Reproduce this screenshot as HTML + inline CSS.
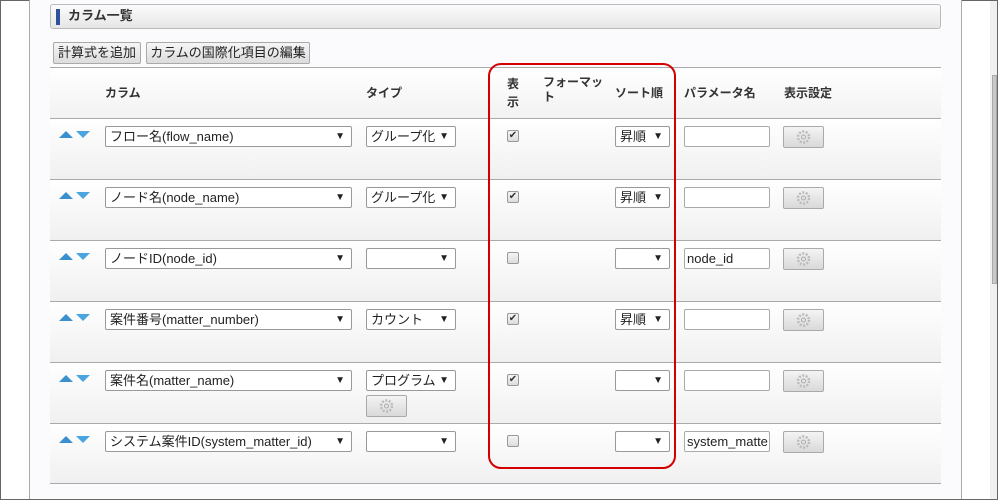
<!DOCTYPE html>
<html><head><meta charset="utf-8"><style>
*{box-sizing:border-box;margin:0;padding:0}
body{width:998px;height:500px;position:relative;overflow:hidden;background:#fff;font-family:"Liberation Sans","Noto Sans CJK JP",sans-serif;font-size:13px;color:#222}
.a{position:absolute}
.frame{left:0;top:0;width:998px;height:500px;border:1px solid #666}
.main{left:29px;top:0;width:933px;height:499px;background:#fbfbfd;border-left:1px solid #aaa;border-right:1px solid #aaa}
.title{left:50px;top:4px;width:891px;height:25px;border:1px solid #bbb;border-radius:3px;background:linear-gradient(#fbfbfb,#e6e6e6)}
.title b{position:absolute;left:5px;top:4px;width:4px;height:16px;background:#2f4f9f}
.title span{position:absolute;left:17px;top:2px;line-height:18px;font-weight:bold;font-size:13px;color:#333}
.btn{top:42px;height:22px;border:1px solid #aaa;border-radius:2px;background:linear-gradient(#f6f6f6,#dcdcdc);font-size:13px;line-height:18px;padding:1px 0;text-align:center;white-space:nowrap;color:#222}
.hdr{left:50px;top:67px;width:891px;height:52px;border-top:1px solid #aaa;background:linear-gradient(#fff,#f2f2f2)}
.row{left:50px;width:891px;height:61px;border-top:1px solid #aaa;background:linear-gradient(#fff,#f0f0f0)}
.h{font-weight:bold;font-size:12px;line-height:15px;color:#333}
.sel{height:21px;border:1px solid #999;border-radius:2px;background:#fff;font-size:13px;line-height:17px;padding:1px 4px;white-space:nowrap;overflow:hidden}
.sel i{position:absolute;right:6px;top:1px;font-style:normal;font-size:10px;line-height:17px}
.inp{height:21px;border:1px solid #aaa;border-radius:2px;background:#fff;font-size:13px;line-height:17px;padding:1px 2px;white-space:nowrap;overflow:hidden}
.gb{width:41px;height:22px;border:1px solid #aaa;border-radius:2px;background:linear-gradient(#f4f4f4,#d9d9d9)}
.cb{width:12px;height:12px;border:1px solid #999;border-radius:2px;background:linear-gradient(#f4f4f4,#ddd);font-size:10px;line-height:10px;text-align:center;color:#333}
.up{width:0;height:0;border-left:7px solid transparent;border-right:7px solid transparent;border-bottom:7px solid #3a8fcf}
.dn{width:0;height:0;border-left:7px solid transparent;border-right:7px solid transparent;border-top:7px solid #4aa4e0}
.red{left:488px;top:63px;width:188px;height:406px;border:2px solid #d40000;border-radius:13px}
.sb{left:990px;top:1px;width:7px;height:498px;background:#f0f0f0}
.th{left:992px;top:75px;width:5px;height:209px;background:#c8c8c8;border:1px solid #aaa}
</style></head><body>
<div class="a frame"></div>
<div class="a main"></div>
<div class="a sb"></div><div class="a th"></div>
<div class="a title"><b></b><span>カラム一覧</span></div>
<div class="a btn" style="left:53px;width:88px">計算式を追加</div>
<div class="a btn" style="left:146px;width:164px">カラムの国際化項目の編集</div>
<div class="a hdr"></div>
<div class="a h" style="left:105px;top:86px">カラム</div>
<div class="a h" style="left:366px;top:86px">タイプ</div>
<div class="a h" style="left:507px;top:75px;line-height:18px">表<br>示</div>
<div class="a h" style="left:543px;top:75px;line-height:15px">フォーマッ<br>ト</div>
<div class="a h" style="left:615px;top:86px">ソート順</div>
<div class="a h" style="left:684px;top:86px">パラメータ名</div>
<div class="a h" style="left:784px;top:86px">表示設定</div>

<svg width="0" height="0" style="position:absolute"><defs><g id="gear"><circle cx="0" cy="0" r="5.5" fill="none" stroke="#bbb" stroke-width="2.5" stroke-dasharray="2 1.5"/><circle cx="0" cy="0" r="2" fill="none" stroke="#aaa" stroke-width="1"/></g></defs></svg>

<div class="a row" style="top:118px"></div>
<div class="a row" style="top:179px"></div>
<div class="a row" style="top:240px"></div>
<div class="a row" style="top:301px"></div>
<div class="a row" style="top:362px"></div>
<div class="a row" style="top:423px;border-bottom:1px solid #aaa"></div>

<div id="rows"></div>
<script>
var R=[["フロー名(flow_name)","グループ化",1,"昇順","",0],["ノード名(node_name)","グループ化",1,"昇順","",0],["ノードID(node_id)","",0,"","node_id",0],["案件番号(matter_number)","カウント",1,"昇順","",0],["案件名(matter_name)","プログラム",1,"","",1],["システム案件ID(system_matter_id)","",0,"","system_matte",0]];
var h="";
R.forEach(function(r,i){var t=126+i*61;
h+='<div class="a up" style="left:59px;top:'+(t+5)+'px"></div><div class="a dn" style="left:76px;top:'+(t+5)+'px"></div>';
h+='<div class="a sel" style="left:105px;top:'+t+'px;width:247px">'+r[0]+'<i>▼</i></div>';
h+='<div class="a sel" style="left:366px;top:'+t+'px;width:90px">'+r[1]+'<i>▼</i></div>';
h+='<div class="a cb" style="left:507px;top:'+(t+4)+'px">'+(r[2]?'✔':'')+'</div>';
h+='<div class="a sel" style="left:615px;top:'+t+'px;width:55px">'+r[3]+'<i>▼</i></div>';
h+='<div class="a inp" style="left:684px;top:'+t+'px;width:86px">'+r[4]+'</div>';
h+='<div class="a gb" style="left:783px;top:'+t+'px"><svg width="39" height="20"><use href="#gear" x="19.5" y="10"/></svg></div>';
if(r[5])h+='<div class="a gb" style="left:366px;top:'+(t+25)+'px"><svg width="39" height="20"><use href="#gear" x="19.5" y="10"/></svg></div>';
});
document.getElementById("rows").innerHTML=h;
</script>
<div class="a red"></div>
</body></html>
